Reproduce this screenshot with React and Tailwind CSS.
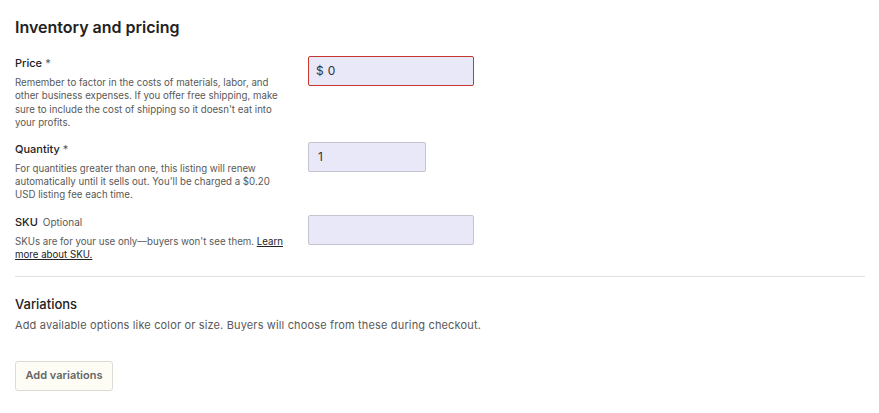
import React from 'react';

const font = { fontFamily: 'Inter, "Noto Sans", sans-serif' };

function FieldRow({ label, extra, children, input }) {
    return (
        <div className="grid grid-cols-[270px_1fr] gap-x-[23px]">
            <div>
                <p className="text-[11px] leading-[14px] font-medium text-[#222]">
                    {label}
                    {extra}
                </p>
                <p className="mt-[6px] text-[9.7px] leading-[13.4px] text-[#595959]">{children}</p>
            </div>
            <div>{input}</div>
        </div>
    );
}

export default function App() {
    return (
        <div className="min-h-[413px] bg-white px-[15px] pt-[17px]" style={font}>
            {/* Inventory and pricing */}
            <h2 className="text-[16px] leading-[20px] font-semibold text-[#222]">Inventory and pricing</h2>

            <div className="mt-[19px] flex flex-col gap-y-[12px]">
                <FieldRow
                    label="Price"
                    extra={<span className="text-[#595959] font-normal"> *</span>}
                    input={
                        <div className="h-[30px] w-[166px] rounded-[2px] border border-[#c8372d] bg-[#e8e8f9] flex items-center px-[7px] text-[12px] text-[#333]">
                            <span>$</span>
                            <span className="ml-[4px]">0</span>
                        </div>
                    }
                >
                    Remember to factor in the costs of materials, labor, and other business expenses. If you offer free shipping, make sure to include the cost of shipping so it doesn't eat into your profits.
                </FieldRow>

                <FieldRow
                    label="Quantity"
                    extra={<span className="text-[#595959] font-normal"> *</span>}
                    input={
                        <div className="h-[30px] w-[118px] rounded-[2px] border border-[#c4c4cf] bg-[#e8e8f9] flex items-center px-[9px] text-[12px] text-[#333]">
                            1
                        </div>
                    }
                >
                    For quantities greater than one, this listing will renew automatically until it sells out. You'll be charged a $0.20 USD listing fee each time.
                </FieldRow>

                <div className="mt-[1px]">
                    <FieldRow
                        label="SKU"
                        extra={<span className="ml-[5px] text-[10px] text-[#595959] font-normal">Optional</span>}
                        input={
                            <div className="h-[30px] w-[166px] rounded-[2px] border border-[#c4c4cf] bg-[#e8e8f9]" />
                        }
                    >
                        SKUs are for your use only—buyers won't see them.{' '}
                        <a href="#" className="underline text-[#222]">Learn more about SKU.</a>
                    </FieldRow>
                </div>
            </div>

            <div className="mt-[14px] h-px w-[850px] bg-[#e1e1e1]" />

            {/* Variations */}
            <div className="mt-[18px]">
                <h3 className="text-[13px] leading-[18px] font-medium text-[#222]">Variations</h3>
                <p className="mt-[4px] text-[11px] leading-[16px] text-[#595959] tracking-[0.15px]">
                    Add available options like color or size. Buyers will choose from these during checkout.
                </p>
                <button
                    type="button"
                    className="mt-[28px] h-[30px] w-[98px] rounded-[3px] border border-[#dcdcd4] bg-[#fdfdf6] text-[11px] font-semibold text-[#666]"
                >
                    Add variations
                </button>
            </div>
        </div>
    );
}
